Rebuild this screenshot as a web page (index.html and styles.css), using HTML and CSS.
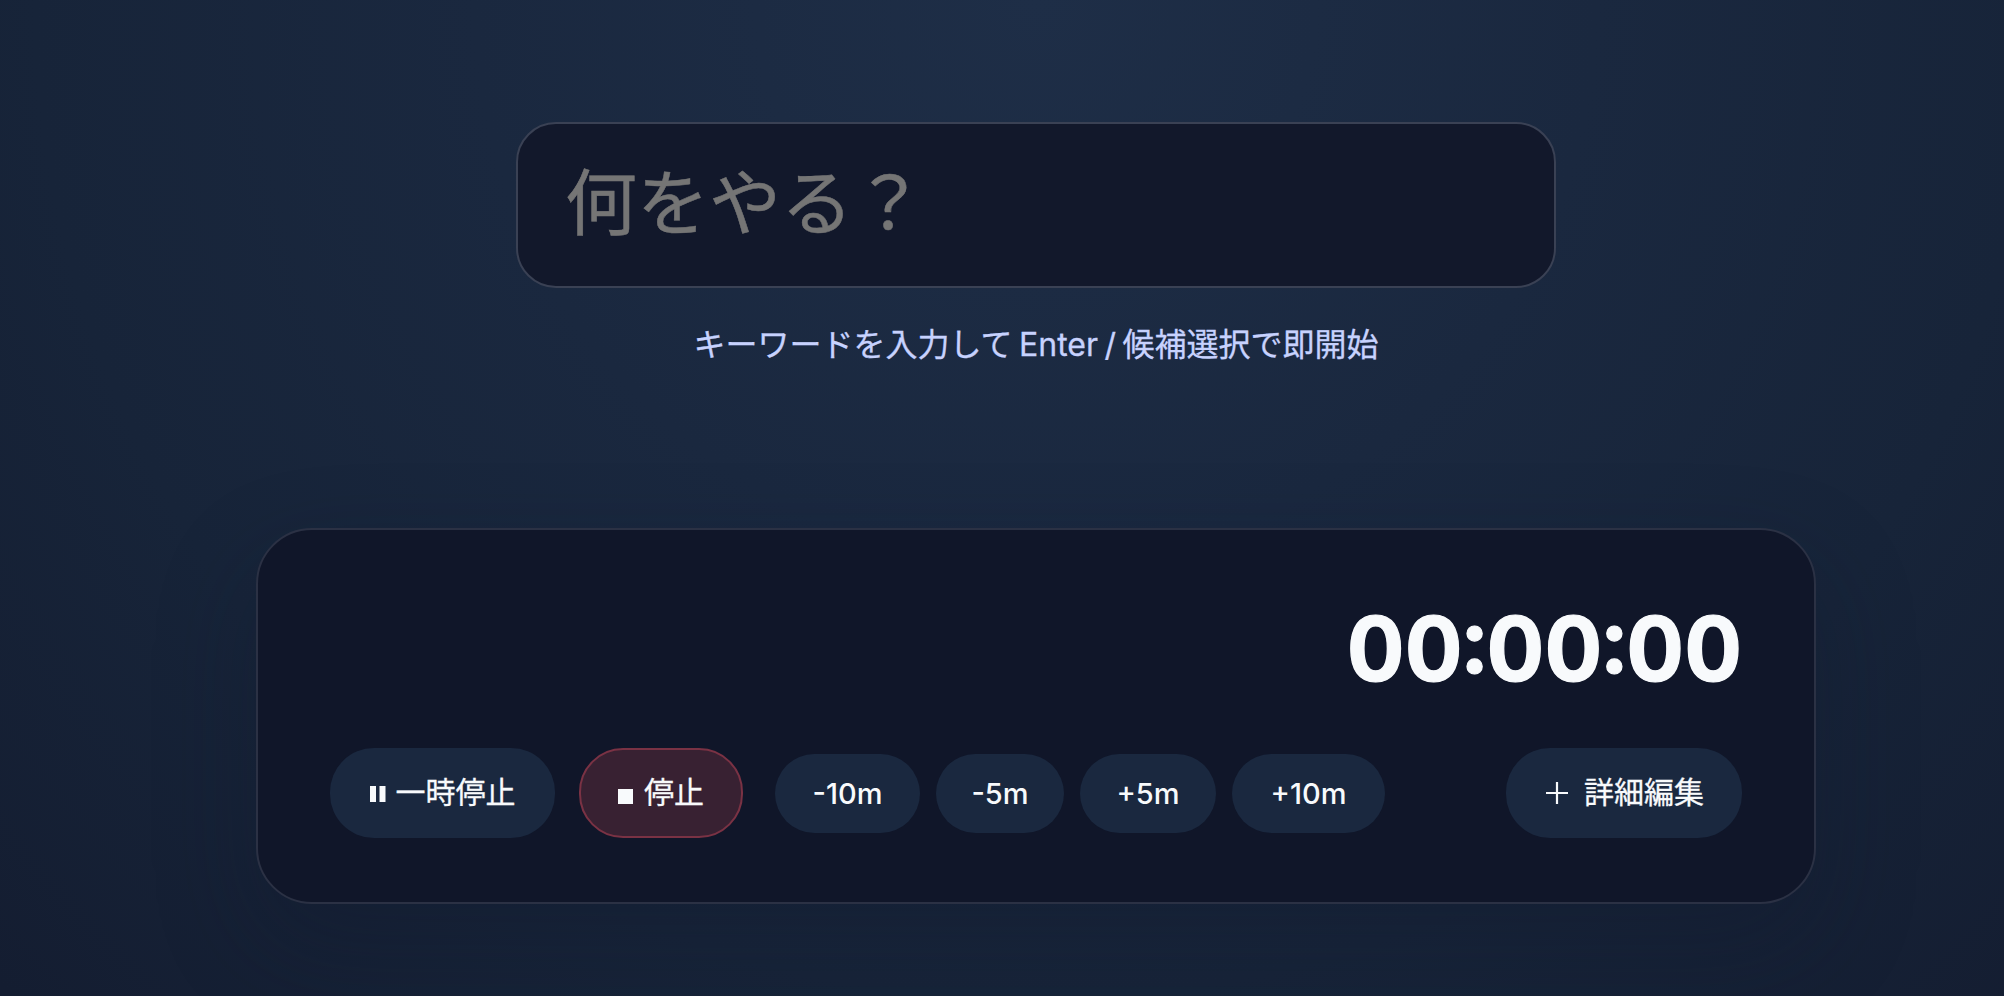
FILE: index.html
```html
<!DOCTYPE html>
<html lang="ja">
<head>
<meta charset="utf-8">
<title>タイマー</title>
<link rel="stylesheet" href="styles.css">
</head>
<body>
<main class="page">
  <section class="search">
    <input class="search-input" type="text" placeholder="何をやる？">
    <p class="hint">キーワードを入力して Enter / 候補選択で即開始</p>
  </section>
  <section class="card">
    <div class="timer">00:00:00</div>
    <div class="controls">
      <button class="btn pause">
        <svg class="icon-pause" viewBox="0 0 16 16"><path d="M0 0h6v16H0zM9.500 0h6v16h-6z"/></svg>
        <span>一時停止</span>
      </button>
      <button class="btn stop">
        <svg class="icon-stop" viewBox="0 0 16 16"><path d="M0 0h15v15H0z"/></svg>
        <span>停止</span>
      </button>
      <div class="adjust">
        <button class="btn small m10">-10m</button>
        <button class="btn small m5">-5m</button>
        <button class="btn small p5">+5m</button>
        <button class="btn small p10">+10m</button>
      </div>
      <button class="btn detail">
        <svg class="icon-plus" viewBox="0 0 24 24"><path d="M12 1v22M1 12h22"/></svg>
        <span>詳細編集</span>
      </button>
    </div>
  </section>
</main>
</body>
</html>
```
FILE: styles.css
```css
* { box-sizing: border-box; }
body {
  margin: 0;
  height: 996px;
  overflow: hidden;
  font-family: Inter, "Noto Sans CJK JP", sans-serif;
  color: #f8fafc;
  background: radial-gradient(circle at 1036px 0, #1e2e47 0, #1a283f 560px, #172439 1000px, #141d31 1430px);
}
.page {
  width: 1560px;
  margin-left: 256px;
  padding-top: 122px;
}
.search {
  height: 406px;
  display: flex;
  flex-direction: column;
  align-items: center;
}
.search-input {
  width: 1040px;
  height: 166px;
  padding: 0 47px 6px;
  border: 2px solid #3a4154;
  border-radius: 40px;
  background: #12182b;
  font: 400 72px Inter, "Noto Sans CJK JP", sans-serif;
  color: #f8fafc;
  outline: none;
}
.search-input::placeholder { color: #757575; opacity: 1; -webkit-text-stroke: 0.5px #757575; }
.hint {
  margin: 33px 0 0;
  font-size: 32px;
  line-height: 48px;
  word-spacing: -2.500px;
  white-space: nowrap;
  color: #c7d2fe;
  -webkit-text-stroke: 0.3px #c7d2fe;
}
.card {
  height: 376px;
  padding: 66px 72px;
  border: 2px solid #2b3144;
  border-radius: 56px;
  background: #101629;
  box-shadow: 0 40px 100px rgba(15, 23, 42, .3);
}
.timer {
  height: 108px;
  line-height: 106px;
  text-align: right;
  font-size: 89.500px;
  font-weight: 700;
  font-variant-numeric: tabular-nums;
  -webkit-text-stroke: 1.200px #f8fafc;
}
.controls {
  display: flex;
  align-items: center;
  margin-top: 44px;
}
.btn {
  display: flex;
  align-items: center;
  justify-content: center;
  height: 90px;
  padding: 0;
  border: 0;
  border-radius: 44px;
  background: #1a283f;
  color: #f8fafc;
  font: 400 30px/44px Inter, "Noto Sans CJK JP", sans-serif;
  white-space: nowrap;
}
.btn svg { fill: currentColor; }
.btn span { margin-top: -2px; -webkit-text-stroke: 0.3px #f8fafc; }
.pause { width: 225px; gap: 10px; }
.stop {
  width: 164px;
  gap: 10px;
  margin-left: 24px;
  border: 2px solid #7a3244;
  background: #382132;
}
.adjust { display: flex; gap: 16px; margin: 1px 0 0 32px; }
.small { height: 79px; border-radius: 40px; font-size: 29px; font-weight: 500; }
.m10 { width: 145px; }
.m5 { width: 128px; }
.p5 { width: 136px; }
.p10 { width: 153px; }
.detail { width: 236px; gap: 15px; margin-left: auto; }
.icon-pause { width: 16px; height: 16px; margin-top: 1px; }
.icon-stop { width: 16px; height: 16px; margin-top: 7px; }
.icon-plus { width: 24px; height: 24px; margin: -1px 0 0 1px; }
.btn .icon-plus { fill: none; stroke: currentColor; stroke-width: 2.2; }
```
